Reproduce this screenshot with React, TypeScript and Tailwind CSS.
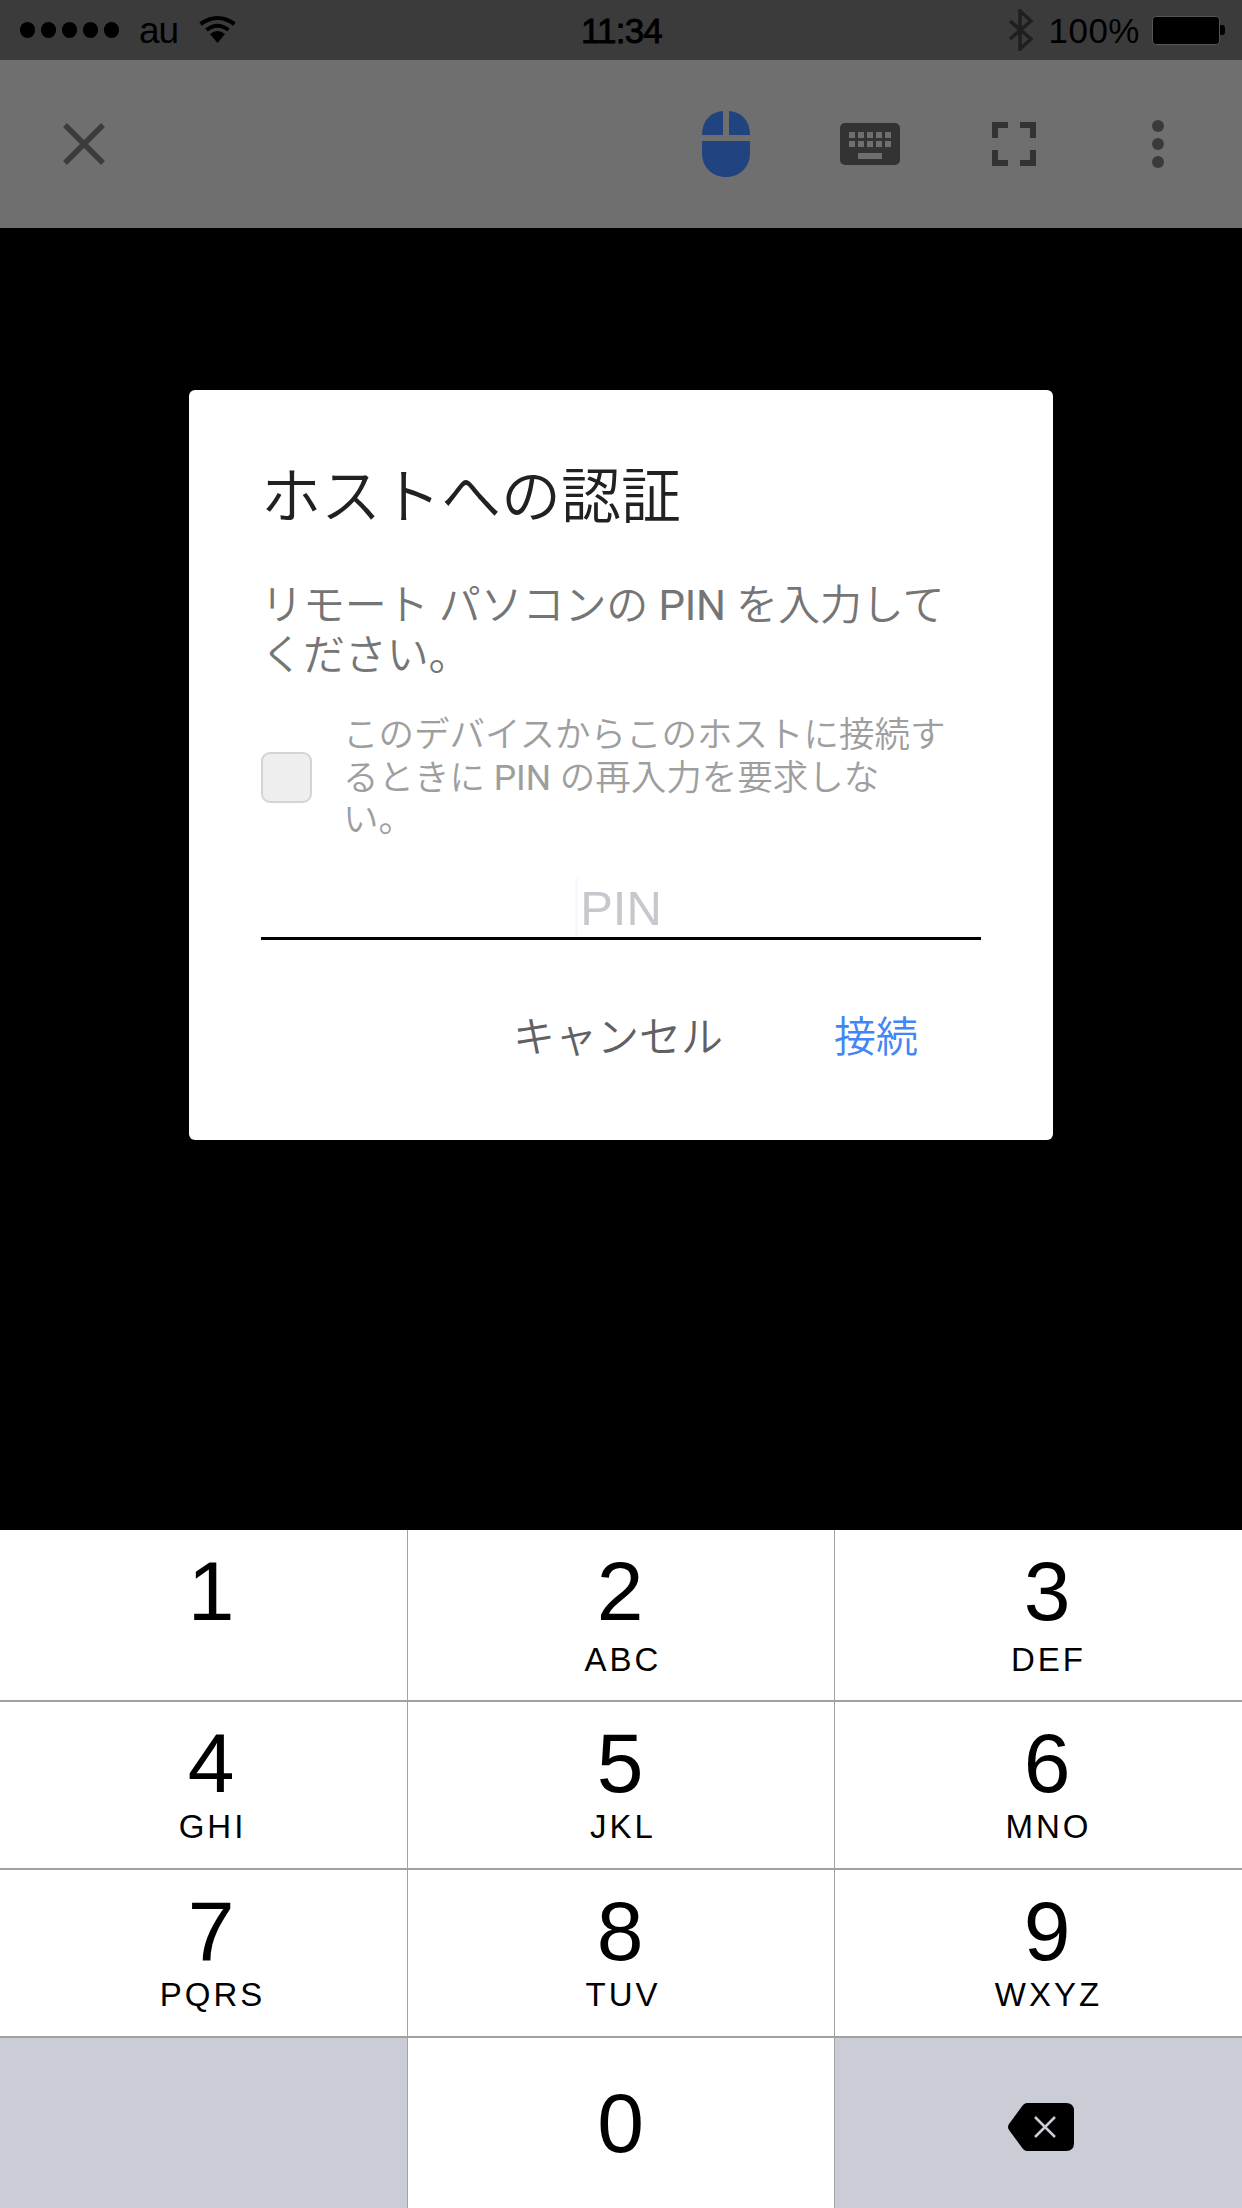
const cjk = "font-['Roboto','Noto_Sans_CJK_JP',sans-serif]";

function Key({ d, l, col, first }: { d: string; l?: string; col: number; first?: boolean }) {
  const offset = col === 0 ? "pl-[18px]" : col === 1 ? "pl-[4px]" : "pl-[20px]";
  const digitPad = col === 0 ? "pr-[3px]" : col === 1 ? "pr-[6px]" : "pr-[3px]";
  return (
    <div className={`flex flex-col items-center bg-white ${offset} ${col > 0 ? "border-l border-[#a3a3a3]" : ""}`}>
      <div className={`text-[84px] leading-[60px] mt-[31px] text-black ${digitPad}`}>{d}</div>
      {l ? (
        <div className={`text-[33px] leading-[26px] ${first ? "mt-[26px]" : "mt-[21px]"} tracking-[3px] text-black`}>{l}</div>
      ) : null}
    </div>
  );
}

function Row({ children, h }: { children: React.ReactNode; h: string }) {
  return <div className={`grid grid-cols-[407px_427px_408px] ${h} border-b-2 border-[#a0a0a0]`}>{children}</div>;
}

export default function App() {
  return (
    <div className="w-[1242px] h-[2208px] flex flex-col bg-black overflow-hidden font-['Liberation_Sans',sans-serif]">
      {/* status bar */}
      <div className="h-[60px] shrink-0 bg-[#3b3b3b] flex items-center text-black">
        <div className="flex-1 flex items-center pl-[20px]">
          <div className="flex gap-[6px]">
            {[0, 1, 2, 3, 4].map((i) => (
              <div key={i} className="w-[15px] h-[16px] rounded-full bg-black" />
            ))}
          </div>
          <span className="ml-[20px] text-[37px] leading-[60px] mt-[2px] tracking-[-1px]">au</span>
          <svg className="ml-[21px] mb-[3px]" width="37" height="28" viewBox="0 0 37 28" fill="none" stroke="black" strokeWidth="4">
            <path d="M1.5 9 Q18.5 -3 35.5 9" />
            <path d="M7.5 15 Q18.5 6.5 29.5 15" />
            <path d="M11 19 L18.5 28 L26 19 Q18.5 13 11 19Z" fill="black" stroke="none" />
          </svg>
        </div>
        <div className="text-[35px] leading-[60px] mt-[2px] tracking-[-0.8px] pr-[2px] [-webkit-text-stroke:0.9px_black]">11:34</div>
        <div className="flex-1 flex items-center justify-end pr-[17px]">
          <svg width="24" height="42" viewBox="0 0 24 42" fill="none" stroke="#1f1f1f" strokeWidth="3.5">
            <path d="M1 12 L22 30 L11 40 L11 2 L22 12 L1 30" />
          </svg>
          <span className="ml-[15px] text-[35px] leading-[60px] mt-[2px] tracking-[0.5px]">100%</span>
          <div className="ml-[12px] w-[68px] h-[29px] rounded-[4px] bg-black border border-[#555]" />
          <div className="w-[5px] h-[10px] bg-black rounded-r-[3px]" />
        </div>
      </div>

      {/* toolbar */}
      <div className="h-[168px] shrink-0 bg-[#6f6f6f] flex items-center pl-[63px]">
        <svg width="42" height="42" viewBox="0 0 42 42" stroke="#3c3c3c" strokeWidth="5.5">
          <path d="M2 2 L40 40 M40 2 L2 40" />
        </svg>
        <svg className="ml-[597px]" width="48" height="66" viewBox="0 0 48 66" fill="#21437f">
          <path d="M21 0 V24 H0 C0 10 8 1 21 0Z" />
          <path d="M27 0 V24 H48 C48 10 40 1 27 0Z" />
          <path d="M0 30 H48 V42 C48 56 38 66 24 66 C10 66 0 56 0 42Z" />
        </svg>
        <svg className="ml-[90px]" width="60" height="42" viewBox="0 0 60 42" fill="#333333">
          <path fillRule="evenodd" d="M5 0 H55 A5 5 0 0 1 60 5 V37 A5 5 0 0 1 55 42 H5 A5 5 0 0 1 0 37 V5 A5 5 0 0 1 5 0Z
            M9 9 h6 v6 h-6z M18 9 h6 v6 h-6z M27 9 h6 v6 h-6z M36 9 h6 v6 h-6z M45 9 h6 v6 h-6z
            M9 18 h6 v6 h-6z M18 18 h6 v6 h-6z M27 18 h6 v6 h-6z M36 18 h6 v6 h-6z M45 18 h6 v6 h-6z
            M18 30 h24 v6 h-24z" />
        </svg>
        <svg className="ml-[92px]" width="44" height="44" viewBox="0 0 44 44" fill="none" stroke="#333333" strokeWidth="6">
          <path d="M3 16 V3 H16 M28 3 H41 V16 M41 28 V41 H28 M16 41 H3 V28" />
        </svg>
        <div className="ml-[116px] flex flex-col gap-[6px]">
          <div className="w-[12px] h-[12px] rounded-full bg-[#3a3a3a]" />
          <div className="w-[12px] h-[12px] rounded-full bg-[#3a3a3a]" />
          <div className="w-[12px] h-[12px] rounded-full bg-[#3a3a3a]" />
        </div>
      </div>

      {/* canvas */}
      <div className={`h-[1302px] shrink-0 bg-black flex flex-col items-center pt-[162px] ${cjk}`}>
        <div className="w-[864px] h-[750px] bg-white rounded-[6px] pl-[72px] pr-[72px] pt-[77px] flex flex-col">
          <h1 className="text-[60px] leading-[62px] text-[#212121] font-[350]">ホストへの認証</h1>
          <p className="mt-[52px] text-[42px] leading-[50px] text-[#757575] tracking-[-0.1px] font-[350]">
            リモート パソコンの <span className="font-normal">PIN</span> を入力して
            <br />
            ください。
          </p>
          <div className="mt-[33px] flex items-center">
            <div className="w-[51px] h-[51px] rounded-[9px] bg-[#eeeeee] border-2 border-[#d4d4d4]" />
            <div className="ml-[31px] text-[35.5px] leading-[42.5px] text-[#9e9e9e] font-[350]">
              このデバイスからこのホストに接続す
              <br />
              るときに <span className="font-normal">PIN</span> の再入力を要求しな
              <br />
              い。
            </div>
          </div>
          <div className="relative mt-[36px] h-[62px] flex items-end justify-center border-b-[3px] border-black">
            <div className="absolute left-[314px] top-0 bottom-0 w-[3px] bg-[#f8f8ff]" />
            <span className="text-[49px] leading-[58px] text-[#c7c7cd] font-['Liberation_Sans',sans-serif]">PIN</span>
          </div>
          <div className="mt-[68px] flex justify-end text-[42px] leading-[60px] pr-[63px] font-[350]">
            <span className="text-[#616161]">キャンセル</span>
            <span className="ml-[111px] text-[#4285f4]">接続</span>
          </div>
        </div>
      </div>

      {/* keypad */}
      <div className="h-[678px] shrink-0 flex flex-col bg-white">
        <Row h="h-[172px]">
          <Key d="1" col={0} first />
          <Key d="2" l="ABC" col={1} first />
          <Key d="3" l="DEF" col={2} first />
        </Row>
        <Row h="h-[168px]">
          <Key d="4" l="GHI" col={0} />
          <Key d="5" l="JKL" col={1} />
          <Key d="6" l="MNO" col={2} />
        </Row>
        <Row h="h-[168px]">
          <Key d="7" l="PQRS" col={0} />
          <Key d="8" l="TUV" col={1} />
          <Key d="9" l="WXYZ" col={2} />
        </Row>
        <div className="grid grid-cols-[407px_427px_408px] h-[170px]">
          <div className="bg-[#cacdd5]" />
          <div className="flex items-center justify-center bg-white border-l border-[#a3a3a3] pr-[1px]">
            <span className="text-[84px] leading-[60px] text-black">0</span>
          </div>
          <div className="flex items-center justify-center bg-[#cacdd5] border-l border-[#a3a3a3] pl-[4px]">
            <svg className="mt-[8px]" width="66" height="48" viewBox="0 0 66 48">
              <path d="M19 0 H58 Q66 0 66 8 V40 Q66 48 58 48 H19 Q17 48 15 46 L1 27 Q-1 24 1 21 L15 2 Q17 0 19 0Z" fill="#000" />
              <path d="M27 14 L47 34 M47 14 L27 34" stroke="#cacdd5" strokeWidth="2.5" />
            </svg>
          </div>
        </div>
      </div>
    </div>
  );
}
